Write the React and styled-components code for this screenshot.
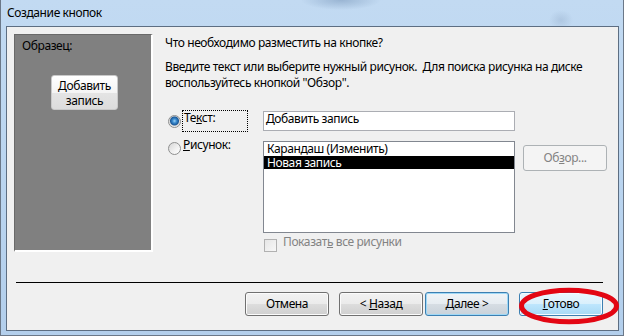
import styled, { createGlobalStyle } from 'styled-components';

const GlobalStyle = createGlobalStyle`
  html, body {
    margin: 0;
    padding: 0;
    background: #ffffff;
  }
  body {
    font-family: "Segoe UI", "Noto Sans", sans-serif;
    font-size: 12px;
    letter-spacing: -0.4px;
    color: #000000;
  }
`;

const Window = styled.div`
  position: relative;
  width: 624px;
  height: 336px;
  box-sizing: border-box;
  display: flex;
  flex-direction: column;
  padding: 0 4px 4px 5px;
  border: 1px solid #6b7888;
  border-top: none;
  background:
    radial-gradient(ellipse 40px 10px at 340px 0px, rgba(120, 150, 185, 0.55), transparent),
    radial-gradient(ellipse 12px 10px at 560px 20px, rgba(140, 165, 195, 0.35), transparent),
    linear-gradient(180deg, #c2daf2 0%, #bcd6f0 40%, #b3cfec 100%);
`;

const TitleBar = styled.div`
  height: 26px;
  line-height: 26px;
  padding-left: 1px;
  font-size: 12px;
  color: #000000;
`;

const Client = styled.div`
  flex: 1;
  display: flex;
  flex-direction: column;
  border: 1px solid #5d6e82;
  background: #f0f0f0;
  padding: 7px 7px 0 7px;
`;

const Body = styled.div`
  display: flex;
  height: 218px;
`;

const Preview = styled.div`
  width: 139px;
  height: 218px;
  box-sizing: border-box;
  display: flex;
  flex-direction: column;
  background: #808080;
  border-top: 1px solid #696969;
  border-left: 1px solid #696969;
  border-right: 2px solid #ffffff;
  border-bottom: 2px solid #ffffff;
  padding: 3px 0 0 7px;
`;

const PreviewLabel = styled.div`
  line-height: 16px;
`;

const SampleButton = styled.div`
  margin: 21px 0 0 29px;
  width: 67px;
  height: 35px;
  box-sizing: border-box;
  border: 1px solid #c9c9c9;
  border-radius: 3px;
  background: linear-gradient(180deg, #ffffff 0%, #f4f4f4 50%, #e4e4e4 51%, #dcdcdc 100%);
  text-align: center;
  line-height: 15px;
  padding-top: 2px;
`;

const Main = styled.div`
  flex: 1;
  display: flex;
  flex-direction: column;
  margin-left: 12px;
`;

const Question = styled.div`
  margin-top: 1px;
  line-height: 16px;
`;

const Hint = styled.div`
  margin-top: 8px;
  line-height: 16px;
`;

const Options = styled.div`
  margin-top: 19px;
  display: grid;
  grid-template-columns: 98px 252px 92px;
  grid-template-rows: 22px 92px auto;
  row-gap: 9px;
`;

const OptionLabel = styled.div`
  display: flex;
  align-items: ${(p) => (p.$top ? 'flex-start' : 'center')};
  padding-left: 3px;
`;

const Radio = styled.span`
  flex: none;
  width: 13px;
  height: 13px;
  box-sizing: border-box;
  border-radius: 50%;
  border: 1px solid #8e8f8f;
  margin-top: ${(p) => (p.$top ? '1px' : '0')};
  background: ${(p) =>
    p.$checked
      ? 'radial-gradient(circle at 50% 45%, #9fd3f7 0px, #3a8cd0 2px, #1c5a9a 4px, #d9d9d9 5px, #f4f4f4 6px)'
      : 'linear-gradient(135deg, #d6d6d6 0%, #f2f2f2 60%, #ffffff 100%)'};
`;

const FocusLabel = styled.span`
  margin-left: 1px;
  width: 66px;
  height: 22px;
  box-sizing: border-box;
  border: 1px dotted #000000;
  line-height: 14px;
  padding-left: 1px;
`;

const PlainLabel = styled.span`
  margin: -3px 0 0 2px;
  line-height: 14px;
`;

const Key = styled.span`
  text-decoration: underline;
`;

const TextBox = styled.div`
  align-self: center;
  height: 20px;
  box-sizing: border-box;
  border: 1px solid #abadb3;
  background: #ffffff;
  line-height: 14px;
  padding-left: 2px;
`;

const ListBox = styled.div`
  box-sizing: border-box;
  border: 1px solid #828790;
  background: #ffffff;
`;

const ListItem = styled.div`
  height: 13.5px;
  line-height: 13px;
  padding-left: 3px;
  background: ${(p) => (p.$selected ? '#000000' : 'transparent')};
  color: ${(p) => (p.$selected ? '#ffffff' : '#000000')};
`;

const BrowseButton = styled.div`
  margin: 4px 0 0 8px;
  width: 84px;
  height: 26px;
  box-sizing: border-box;
  border: 1px solid #adb2b5;
  border-radius: 3px;
  background: #f4f4f4;
  color: #838383;
  text-align: center;
  line-height: 23px;
`;

const CheckRow = styled.div`
  grid-column: 2 / 4;
  display: flex;
  align-items: flex-start;
  margin-top: -3px;
`;

const CheckBox = styled.span`
  flex: none;
  margin-left: 1px;
  width: 13px;
  height: 13px;
  box-sizing: border-box;
  border: 1px solid #b1b1b1;
  background: linear-gradient(135deg, #e6e6e6 0%, #f7f7f7 100%);
`;

const CheckLabel = styled.span`
  margin: -4px 0 0 6px;
  line-height: 14px;
  color: #838383;
`;

const Separator = styled.div`
  margin: 30px 8px 0 2px;
  height: 1px;
  background: #000000;
`;

const Footer = styled.div`
  margin-top: 9px;
  display: flex;
  justify-content: flex-end;
  padding-right: 8px;
`;

const variants = {
  normal: `
    border-color: #707070;
    background: linear-gradient(180deg, #f2f2f2 0%, #ebebeb 49%, #dddddd 50%, #cfcfcf 100%);
    box-shadow: inset 0 0 0 1px #fbfbfb;
  `,
  default: `
    border-color: #3c7fb1;
    background: linear-gradient(180deg, #f0f4f7 0%, #e6ecf1 49%, #d6dde3 50%, #c9d2da 100%);
    box-shadow: inset 0 0 0 1px #9fd8f6;
  `,
  hover: `
    border-color: #3c7fb1;
    background: linear-gradient(180deg, #eaf6fd 0%, #d9f0fc 49%, #bee6fd 50%, #a7d9f5 100%);
    box-shadow: inset 0 0 0 1px #f4fbff;
  `,
};

const WizardButton = styled.div`
  width: 84px;
  height: 24px;
  box-sizing: border-box;
  border: 1px solid;
  border-radius: 3px;
  text-align: center;
  line-height: 21px;
  white-space: pre;
  margin-right: ${(p) => p.$gap || 0}px;
  ${(p) => variants[p.$variant || 'normal']}
`;

const Annotation = styled.svg`
  position: absolute;
  left: -1px;
  top: 0;
  width: 624px;
  height: 336px;
  pointer-events: none;
`;

export default function App() {
  return (
    <>
      <GlobalStyle />
      <Window>
        <TitleBar>Создание кнопок</TitleBar>
        <Client>
          <Body>
            <Preview>
              <PreviewLabel>Образец:</PreviewLabel>
              <SampleButton>
                Добавить
                <br />
                запись
              </SampleButton>
            </Preview>
            <Main>
              <Question>Что необходимо разместить на кнопке?</Question>
              <Hint>
                Введите текст или выберите нужный рисунок.&nbsp; Для поиска рисунка на диске
                <br />
                воспользуйтесь кнопкой ''Обзор''.
              </Hint>
              <Options>
                <OptionLabel>
                  <Radio $checked />
                  <FocusLabel>
                    Те<Key>к</Key>ст:
                  </FocusLabel>
                </OptionLabel>
                <TextBox>Добавить запись</TextBox>
                <div />
                <OptionLabel $top>
                  <Radio $top />
                  <PlainLabel>
                    <Key>Р</Key>исунок:
                  </PlainLabel>
                </OptionLabel>
                <ListBox>
                  <ListItem>Карандаш (Изменить)</ListItem>
                  <ListItem $selected>Новая запись</ListItem>
                </ListBox>
                <div>
                  <BrowseButton>
                    Об<Key>з</Key>ор...
                  </BrowseButton>
                </div>
                <CheckRow>
                  <CheckBox />
                  <CheckLabel>
                    Показат<Key>ь</Key> все рисунки
                  </CheckLabel>
                </CheckRow>
              </Options>
            </Main>
          </Body>
          <Separator />
          <Footer>
            <WizardButton $gap={10}>Отмена</WizardButton>
            <WizardButton $gap={2}>
              {'< '}
              <Key>Н</Key>азад
            </WizardButton>
            <WizardButton $gap={10} $variant="default">
              <Key>Д</Key>
              {'алее >'}
            </WizardButton>
            <WizardButton $variant="hover">
              <Key>Г</Key>отово
            </WizardButton>
          </Footer>
        </Client>
        <Annotation viewBox="0 0 624 336">
          <ellipse cx="569" cy="306" rx="47.5" ry="15.8" fill="none" stroke="#e30613" strokeWidth="5" />
        </Annotation>
      </Window>
    </>
  );
}
